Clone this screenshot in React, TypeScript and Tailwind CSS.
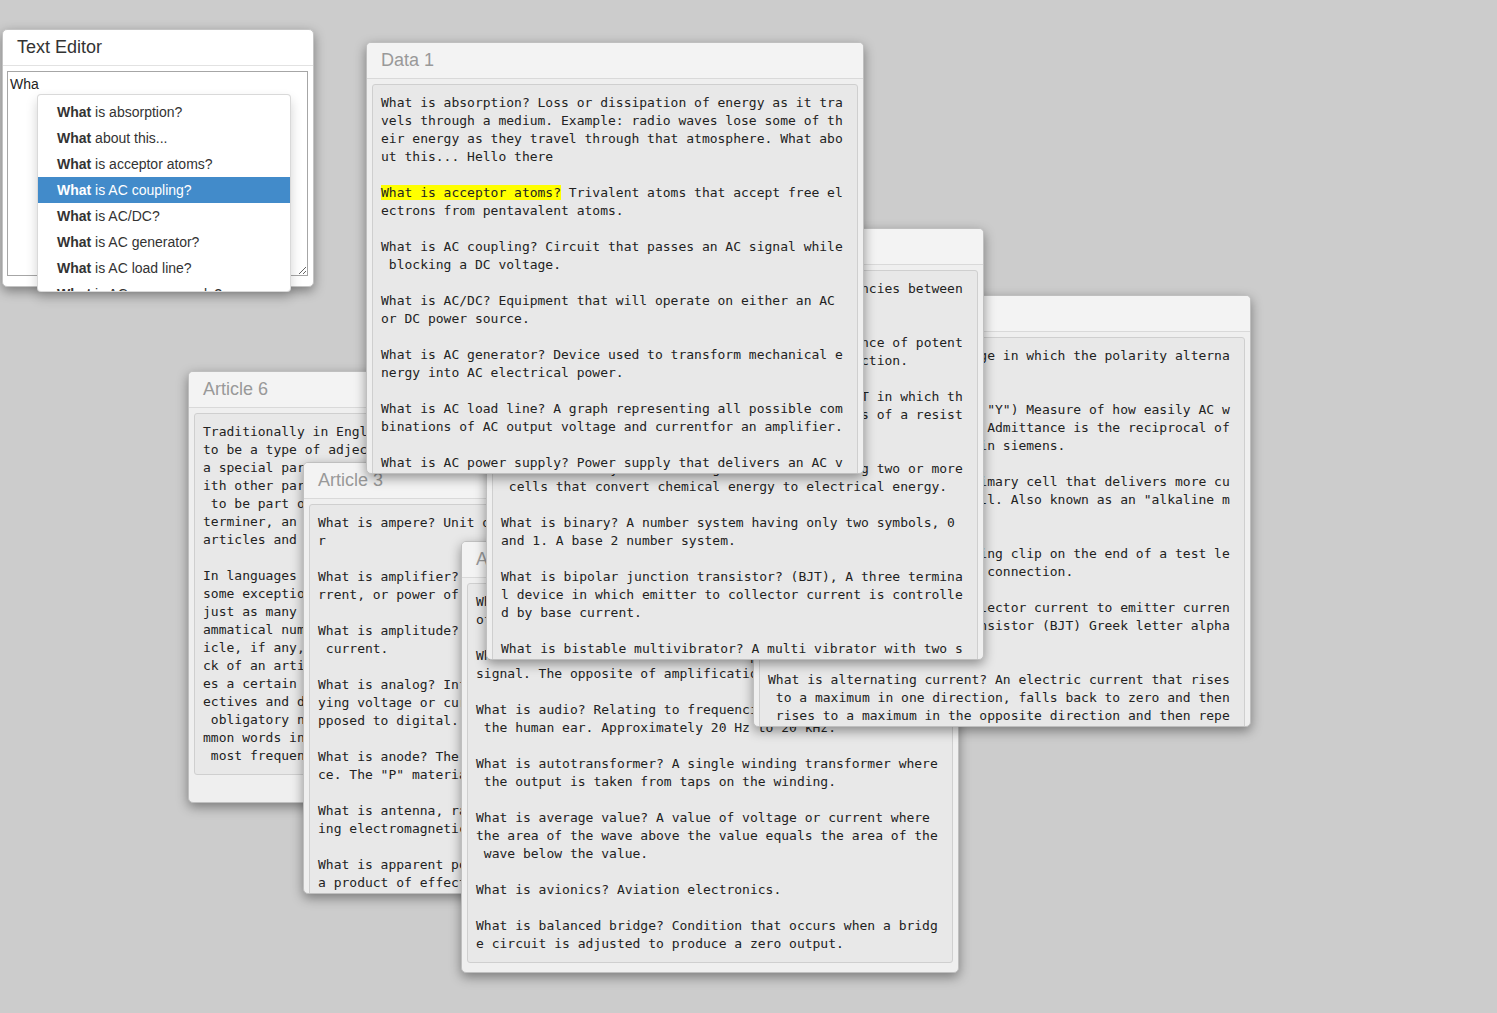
import type { ReactNode } from "react";

const articleSix = [
  "Traditionally in English, an article is usually considered to be a type of adjective. In some languages, articles are a special part of speech, which cannot easily be combined with other parts of speech. It is also possible for articles to be part of another part of speech category such as a determiner, an English part of speech category that combines articles and demonstratives (such as 'this' and 'that').",
  "In languages that employ articles, every common noun, with some exceptions, is expressed with a certain definiteness, just as many languages express every noun with a certain grammatical number. Every noun must be accompanied by the article, if any, corresponding to its definiteness, and the lack of an article (considered a zero article) itself specifies a certain definiteness. This is in contrast to other adjectives and determiners, which are typically optional. This obligatory nature of articles makes them among the most common words in many languages — in English, for example, the most frequent word is the.",
].join("\n\n");

const articleThree = [
  "What is ampere? Unit of electric current through a conductor",
  "What is amplifier? A device which increases the voltage, current, or power of a signal.",
  "What is amplitude? The peak value of any varying voltage or current.",
  "What is analog? Information represented by continuously varying voltage or current signals that change gradually, as opposed to digital.",
  'What is anode? The positive lead of a diode or similar device. The "P" material of a diode.',
  "What is antenna, radio? A device for transmitting or receiving electromagnetic waves.",
  "What is apparent power? Power in an AC circuit computed as a product of effective voltage and effective current.",
].join("\n\n");

const articleOne = [
  "What is atom? The smallest particle that makes up the type of material called an element.",
  "What is attenuate? To reduce the amplitude of an action or signal. The opposite of amplification.",
  "What is audio? Relating to frequencies that can be heard by the human ear. Approximately 20 Hz to 20 kHz.",
  "What is autotransformer? A single winding transformer where the output is taken from taps on the winding.",
  "What is average value? A value of voltage or current where the area of the wave above the value equals the area of the wave below the value.",
  "What is avionics? Aviation electronics.",
  "What is balanced bridge? Condition that occurs when a bridge circuit is adjusted to produce a zero output.",
].join("\n\n");

const dataThree = [
  "What is AC voltage? A voltage in which the polarity alternates at regular intervals.",
  'What is admittance? (Symbol "Y") Measure of how easily AC will flow through a circuit. Admittance is the reciprocal of impedance and is measured in siemens.',
  'What is alkaline cell? A primary cell that delivers more current than a carbon-zinc cell. Also known as an "alkaline manganese cell".',
  "What is alligator clip? Spring clip on the end of a test lead used to make a temporary connection.",
  "What is alpha? Ratio of collector current to emitter current in a bipolar junction transistor (BJT) Greek letter alpha (α).",
  "What is alternating current? An electric current that rises to a maximum in one direction, falls back to zero and then rises to a maximum in the opposite direction and then repeats the cycle.",
].join("\n\n");

const dataTwo = [
  "What is bandwidth? The range of all the frequencies between the upper and lower cutoff points.",
  "What is barrier potential? The natural difference of potential found across the depletion region of a junction.",
  "What is base bias? A bias circuit used on a BJT in which the base current is supplied through VCC by means of a resistor.",
  "What is battery? A DC voltage source containing two or more cells that convert chemical energy to electrical energy.",
  "What is binary? A number system having only two symbols, 0 and 1. A base 2 number system.",
  "What is bipolar junction transistor? (BJT), A three terminal device in which emitter to collector current is controlled by base current.",
  "What is bistable multivibrator? A multi vibrator with two stable states.",
  "What is bleeder current? Current drawn continuously from a voltage source.",
].join("\n\n");

const dataOne = [
  "What is absorption? Loss or dissipation of energy as it travels through a medium. Example: radio waves lose some of their energy as they travel through that atmosphere. What about this... Hello there",
  "What is acceptor atoms? Trivalent atoms that accept free electrons from pentavalent atoms.",
  "What is AC coupling? Circuit that passes an AC signal while blocking a DC voltage.",
  "What is AC/DC? Equipment that will operate on either an AC or DC power source.",
  "What is AC generator? Device used to transform mechanical energy into AC electrical power.",
  "What is AC load line? A graph representing all possible combinations of AC output voltage and currentfor an amplifier.",
  "What is AC power supply? Power supply that delivers an AC voltage output.",
  "What is AC voltage? A voltage in which the polarity alternates at regular intervals.",
].join("\n\n");

const suggestions = [
  "is absorption?",
  "about this...",
  "is acceptor atoms?",
  "is AC coupling?",
  "is AC/DC?",
  "is AC generator?",
  "is AC load line?",
  "is AC power supply?",
  "is AC voltage?",
];

// the textareas wrap at a fixed 59 columns, breaking inside words
function wrap(text: string, cols = 59): string[] {
  return text.split("\n").flatMap((p) => {
    if (p === "") return [""];
    const out: string[] = [];
    for (let i = 0; i < p.length; i += cols) out.push(p.slice(i, i + cols));
    return out;
  });
}

function Line({ text, mark }: { text: string; mark?: string }) {
  if (mark && text.startsWith(mark)) {
    return (
      <div className="h-[18px] whitespace-pre">
        <span className="bg-[#ffff00]">{mark}</span>
        {text.slice(mark.length)}
      </div>
    );
  }
  return <div className="h-[18px] whitespace-pre">{text}</div>;
}

function Window({
  title,
  className,
  text,
  mark,
}: {
  title: string;
  className: string;
  text: string;
  mark?: string;
}) {
  return (
    <div
      className={`absolute w-[498px] h-[432px] flex flex-col overflow-hidden rounded-[5px] border border-[#bfbfbf] bg-[#efefef] shadow-[0_4px_12px_rgba(0,0,0,0.4)] ${className}`}
    >
      <div className="h-[36px] shrink-0 flex items-center pl-[14px] border-b border-[#d9d9d9] bg-[#f3f3f3] font-['Liberation_Sans',Arial,sans-serif] text-[18px] text-[#999999]">
        {title}
      </div>
      <div className="px-[5px] pt-[5px]">
        <div className="flex flex-col rounded-[3px] border border-[#cfcfcf] bg-[#e8e8e8] pl-[8px] pr-[11px] py-[9px] font-['DejaVu_Sans_Mono',monospace] text-[13px] leading-[18px] text-[#222222]">
          {wrap(text).map((l, i) => (
            <Line key={i} text={l} mark={mark} />
          ))}
        </div>
      </div>
    </div>
  );
}

function Suggestion({ rest, active }: { rest: string; active: boolean }): ReactNode {
  return (
    <li
      className={`h-[26px] shrink-0 pl-[19px] py-[3px] text-[14px] leading-[20px] whitespace-nowrap ${
        active ? "bg-[#428bca] text-white" : "text-[#333333]"
      }`}
    >
      <strong className="font-bold">What</strong> {rest}
    </li>
  );
}

function TextEditor() {
  return (
    <div className="absolute left-[2px] top-[29px] w-[312px] h-[258px] flex flex-col rounded-[5px] border border-[#c4c4c4] bg-white shadow-[0_4px_12px_rgba(0,0,0,0.4)] font-['Liberation_Sans',Arial,sans-serif]">
      <div className="h-[36px] shrink-0 flex items-center pl-[14px] border-b border-[#e2e2e2] text-[18px] text-[#333333]">
        Text Editor
      </div>
      <div className="pl-[4px] pt-[5px]">
        <textarea
          readOnly
          defaultValue="Wha"
          className="block w-[301px] h-[205px] border border-[#a6a6a6] bg-white p-[2px] text-[14px] leading-[20px] text-[#222222] outline-none font-['Liberation_Sans',Arial,sans-serif]"
        />
      </div>
      <ul className="absolute left-[34px] top-[64px] w-[254px] h-[198px] flex flex-col overflow-hidden rounded-[4px] border border-black/15 bg-white pt-[4px] shadow-[0_6px_12px_rgba(0,0,0,0.18)]">
        {suggestions.map((s, i) => (
          <Suggestion key={s} rest={s} active={i === 3} />
        ))}
      </ul>
    </div>
  );
}

export default function App() {
  return (
    <div className="relative w-[1497px] h-[1013px] overflow-hidden bg-[#cccccc]">
      <Window title="Article 6" className="left-[188px] top-[371px]" text={articleSix} />
      <Window title="Article 3" className="left-[303px] top-[462px]" text={articleThree} />
      <Window title="Article 1" className="left-[461px] top-[541px]" text={articleOne} />
      <Window title="Data 3" className="left-[753px] top-[295px]" text={dataThree} />
      <Window title="Data 2" className="left-[486px] top-[228px]" text={dataTwo} />
      <Window title="Data 1" className="left-[366px] top-[42px]" text={dataOne} mark="What is acceptor atoms?" />
      <TextEditor />
    </div>
  );
}
